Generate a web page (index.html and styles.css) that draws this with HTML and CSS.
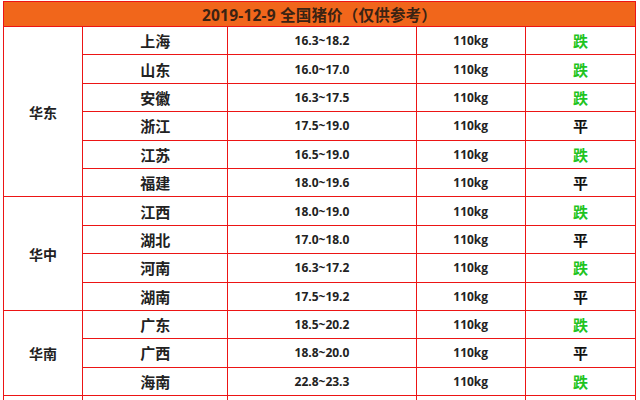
FILE: index.html
```html
<!DOCTYPE html>
<html lang="zh">
<head>
<meta charset="utf-8">
<title>2019-12-9 全国猪价</title>
<link rel="stylesheet" href="styles.css">
</head>
<body>
<table class="price">
<colgroup>
<col class="c-region"><col class="c-prov"><col class="c-price"><col class="c-weight"><col class="c-trend">
</colgroup>
<thead>
<tr><th colspan="5" class="title">2019-12-9 全国猪价（仅供参考）</th></tr>
</thead>
<tbody>
<tr><td rowspan="6" class="region">华东</td><td class="prov">上海</td><td class="num">16.3~18.2</td><td class="num">110kg</td><td class="trend down">跌</td></tr>
<tr><td class="prov">山东</td><td class="num">16.0~17.0</td><td class="num">110kg</td><td class="trend down">跌</td></tr>
<tr><td class="prov">安徽</td><td class="num">16.3~17.5</td><td class="num">110kg</td><td class="trend down">跌</td></tr>
<tr><td class="prov">浙江</td><td class="num">17.5~19.0</td><td class="num">110kg</td><td class="trend flat">平</td></tr>
<tr><td class="prov">江苏</td><td class="num">16.5~19.0</td><td class="num">110kg</td><td class="trend down">跌</td></tr>
<tr><td class="prov">福建</td><td class="num">18.0~19.6</td><td class="num">110kg</td><td class="trend flat">平</td></tr>
<tr><td rowspan="4" class="region">华中</td><td class="prov">江西</td><td class="num">18.0~19.0</td><td class="num">110kg</td><td class="trend down">跌</td></tr>
<tr><td class="prov">湖北</td><td class="num">17.0~18.0</td><td class="num">110kg</td><td class="trend flat">平</td></tr>
<tr><td class="prov">河南</td><td class="num">16.3~17.2</td><td class="num">110kg</td><td class="trend down">跌</td></tr>
<tr><td class="prov">湖南</td><td class="num">17.5~19.2</td><td class="num">110kg</td><td class="trend flat">平</td></tr>
<tr><td rowspan="3" class="region">华南</td><td class="prov">广东</td><td class="num">18.5~20.2</td><td class="num">110kg</td><td class="trend down">跌</td></tr>
<tr><td class="prov">广西</td><td class="num">18.8~20.0</td><td class="num">110kg</td><td class="trend flat">平</td></tr>
<tr><td class="prov">海南</td><td class="num">22.8~23.3</td><td class="num">110kg</td><td class="trend down">跌</td></tr>
<tr class="next"><td></td><td></td><td></td><td></td><td></td></tr>
</tbody>
</table>
</body>
</html>
```
FILE: styles.css
```css
html, body {
  margin: 0;
  padding: 0;
  background: #ffffff;
  overflow: hidden;
}

body {
  padding: 1px 0 0 3px;
  font-family: "Open Sans", "Noto Sans CJK SC", sans-serif;
}

.price {
  border-collapse: collapse;
  table-layout: fixed;
  width: 633px;
}

.c-region { width: 79px; }
.c-prov { width: 145px; }
.c-price { width: 188px; }
.c-weight { width: 109px; }
.c-trend { width: 110px; }

.price th,
.price td {
  border: 1px solid #ec1515;
  padding: 0;
  text-align: center;
  vertical-align: middle;
  color: #222222;
}

.title {
  height: 24px;
  background: #f1661b;
  color: #3b2313 !important;
  font-size: 15.5px;
  font-weight: 700;
  font-family: "Open Sans", "Noto Sans CJK SC", sans-serif;
  letter-spacing: 0.2px;
}

.price tbody td {
  height: 27.4px;
}

.region {
  font-family: "Noto Sans CJK SC", sans-serif;
  font-size: 14px;
  font-weight: 700;
}

.prov {
  font-family: "Noto Sans CJK SC", sans-serif;
  font-size: 15px;
  font-weight: 700;
}

.num {
  font-size: 12px;
  font-weight: 700;
  color: #2a2a2a;
}

.trend {
  font-family: "Noto Sans CJK SC", sans-serif;
  font-size: 15px;
  font-weight: 700;
}

.trend.down { color: #1fc41f !important; }
.trend.flat { color: #111111 !important; }
```
